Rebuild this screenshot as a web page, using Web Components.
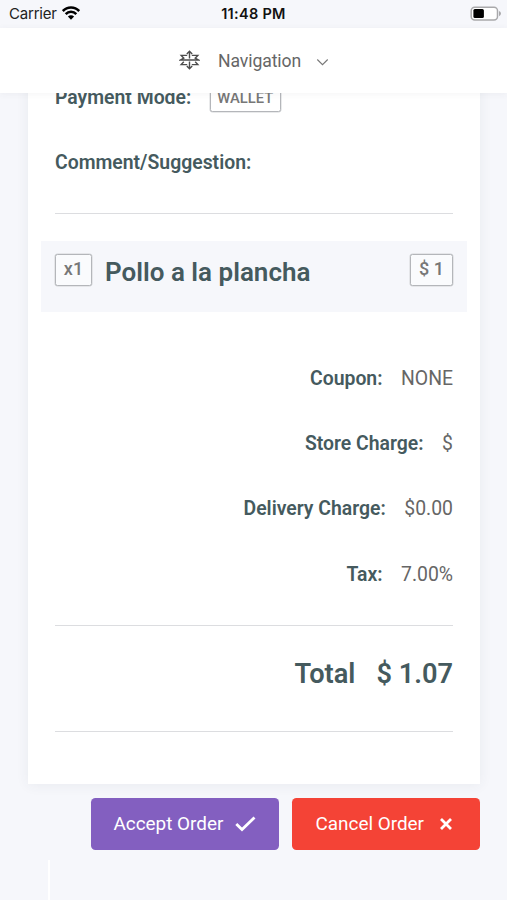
<!DOCTYPE html>
<html lang="en">
<head>
<meta charset="utf-8">
<title>Order</title>
<style>
html,body{margin:0;height:100%;background:#f6f7fb}
body{font-family:Roboto,"Liberation Sans",sans-serif;color:#455a5e;overflow:hidden}
</style>
</head>
<body>
<order-screen></order-screen>
<script>
const define = (name, css, html) => customElements.define(name, class extends HTMLElement {
  constructor() {
    super();
    const t = document.createElement('template');
    t.innerHTML = `<style>*{box-sizing:border-box}${css}</style>${html}`;
    this.attachShadow({mode: 'open'}).append(t.content.cloneNode(true));
  }
});

define('status-bar', `
:host{display:grid;grid-template-columns:1fr auto 1fr;align-items:center;height:28px;padding:0 5px 0 9px;color:#222;font:15px/28px Inter,sans-serif}
.l{display:flex;align-items:center;gap:5px;letter-spacing:-.2px}
.c{font-weight:600;font-size:14.5px;letter-spacing:.3px;color:#111;padding-right:4px}
.r{display:flex;justify-content:flex-end}
svg{display:block}
.l svg{margin-top:-2px}`, `
<div class="l"><span>Carrier</span>
<svg width="18" height="14" viewBox="0 0 18 14" fill="none" stroke="#000" stroke-width="2.5"><path d="M.8 5.1C5.3.2 12.7.2 17.2 5.1M3.7 8.1C6.6 4.9 11.4 4.9 14.3 8.1"/><path d="M9 13.7 5.9 10.5C7.7 8.8 10.3 8.8 12.1 10.5Z" fill="#000" stroke="none"/></svg></div>
<div class="c">11:48 PM</div>
<div class="r"><svg width="32" height="16" viewBox="0 0 32 16"><rect x="1.2" y="1.2" width="26.3" height="12.8" rx="3.5" fill="#fff" stroke="#a9a9ab" stroke-width="1.5"/><rect x="3.4" y="3.1" width="10.5" height="9" rx="1.5" fill="#000"/><path d="M29 5q2 .8 2 2.6t-2 2.6z" fill="#a9a9ab"/></svg></div>`);

define('nav-bar', `
:host{display:flex;align-items:center;height:65px;padding-left:179px;background:#fff;color:#666;font-size:17.6px;letter-spacing:-.1px;box-shadow:0 1px 7px rgba(60,70,90,.06);position:relative;z-index:1}
span{margin:0 15px 0 18px;line-height:24px;padding-top:1px;width:83px}
.a{margin-top:-1px}.b{margin-top:4px}`, `
<svg class="a" width="21" height="20" viewBox="0 0 21 20" fill="none" stroke="#4c4c4c" stroke-width="1.4"><path d="M10.5 1V8.4M10.5 11.6V19M7.8 3.9 10.5 1.2 13.2 3.9M7.8 16.1 10.5 18.8 13.2 16.1M8.2 5.4H2.2L4.8 8.2 1.6 10H19.4L16.2 8.2 18.8 5.4H12.8M4.8 11.8 2.2 14.6H8.2M16.2 11.8 18.8 14.6H12.8"/></svg>
<span>Navigation</span>
<svg class="b" width="13" height="9" viewBox="0 0 13 9" fill="none" stroke="#777" stroke-width="1.1"><path d="M1.3 1.5 6.5 6.7 11.7 1.5"/></svg>`);

define('outline-tag', `
:host{display:inline-flex;align-items:center;justify-content:center;border:1px solid #b4b6ba;border-radius:2.5px;color:#777;background:#fafbfd;font-weight:500;font-size:18px;line-height:20px;height:32px;padding-bottom:1px;box-shadow:0 0 0 .5px #d3d5d8}`, `<slot></slot>`);

define('info-row', `
:host{display:flex;align-items:center;height:65.3px;font-size:19.4px;line-height:24px;white-space:nowrap}
:host([end]){justify-content:flex-end}
::slotted([slot=label]){font-weight:600;font-size:19.4px;margin-right:18.5px}
::slotted(span:not([slot])){font-weight:400;color:#666}`, `<slot name="label"></slot><slot></slot>`);

define('rule-line', `:host{display:block;height:1px;margin-bottom:.5px;background:#dcdde0}`, ``);

define('order-item', `
:host{display:flex;align-items:flex-start;height:71px;margin:27px -14px 34px;padding:13px 14px 0;background:#f6f7fb}
h2{margin:0 auto 0 13px;font-size:26px;line-height:30px;padding-top:3px;font-weight:600;white-space:nowrap}`, `
<slot name="qty"></slot><h2><slot></slot></h2><slot name="price"></slot>`);

define('order-total', `
:host{display:flex;justify-content:flex-end;gap:21px;height:104.5px;padding-top:30px;font-size:27.2px;line-height:34px;font-weight:600}`, `<slot></slot>`);

define('order-card', `
:host{display:block;box-sizing:border-box;margin:-29px 27px 0 28px;height:720px;padding:.9px 27px 0;background:#fff;box-shadow:0 1px 12px rgba(60,70,90,.07)}`, `<slot></slot>`);

define('action-button', `
:host{display:flex;align-items:center;width:188px;height:52.5px;padding-left:22.5px;border-radius:4.5px;color:#fff;background:var(--fill);font-size:18.9px;line-height:24px;white-space:nowrap;gap:12px}
::slotted(svg){flex:none}`, `<slot></slot>`);

define('order-screen', `
:host{display:flex;flex-direction:column;height:900px}
main{flex:1;overflow:hidden;display:flex;flex-direction:column}
.actions{display:flex;justify-content:flex-end;gap:13px;padding:13.5px 27px 0 0}
.edge{width:50px;height:40px;margin-top:auto;border-right:2px solid #fff}
.wallet{width:71px;height:29px;font-size:14.8px;background:#fff;padding:0}
order-card{flex:none}`, `
<status-bar></status-bar>
<nav-bar></nav-bar>
<main>
<order-card>
<info-row><span slot="label">Payment Mode:</span><outline-tag class="wallet">WALLET</outline-tag></info-row>
<info-row style="margin-bottom:17.5px"><span slot="label">Comment/Suggestion:</span></info-row>
<rule-line></rule-line>
<order-item><outline-tag slot="qty" style="width:37px">x1</outline-tag>Pollo a la plancha<outline-tag slot="price" style="width:43px">$ 1</outline-tag></order-item>
<info-row end><span slot="label">Coupon:</span><span>NONE</span></info-row>
<info-row end><span slot="label">Store Charge:</span><span>$</span></info-row>
<info-row end><span slot="label">Delivery Charge:</span><span>$0.00</span></info-row>
<info-row end style="margin-bottom:18px"><span slot="label">Tax:</span><span>7.00%</span></info-row>
<rule-line></rule-line>
<order-total><span>Total</span><span>$ 1.07</span></order-total>
<rule-line></rule-line>
</order-card>
<div class="actions">
<action-button style="--fill:#835fc0"><span>Accept Order</span><svg width="21" height="16" viewBox="0 0 21 16" fill="none" stroke="#fff" stroke-width="2.8"><path d="M1.3 8 7 13.6 19.5 1.5"/></svg></action-button>
<action-button style="--fill:#f44336;gap:16px;padding-left:23.5px"><span>Cancel Order</span><svg width="12" height="14" viewBox="0 0 12 14" fill="none" stroke="#fff" stroke-width="2.8"><path d="M1 2 11 12M11 2 1 12"/></svg></action-button>
</div>
<div class="edge"></div>
</main>`);
</script>
</body>
</html>
